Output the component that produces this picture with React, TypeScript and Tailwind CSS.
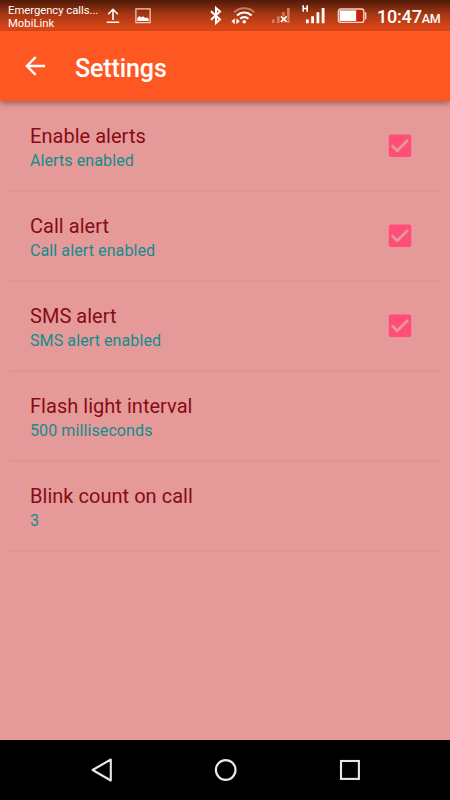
type Setting = { title: string; summary: string; checked?: boolean };

const settings: Setting[] = [
  { title: "Enable alerts", summary: "Alerts enabled", checked: true },
  { title: "Call alert", summary: "Call alert enabled", checked: true },
  { title: "SMS alert", summary: "SMS alert enabled", checked: true },
  { title: "Flash light interval", summary: "500 milliseconds" },
  { title: "Blink count on call", summary: "3" },
];

function StatusBar() {
  return (
    <header className="flex h-[31px] shrink-0 items-start bg-linear-to-b from-[#4f1a08] via-[#a53713] via-45% to-[#e64a19] text-white">
      <div className="ml-[8px] w-[98px] pt-[4px] text-[11.3px] leading-[13px] whitespace-nowrap">
        <div className="tracking-[-0.04px]">Emergency calls...</div>
        <div>MobiLink</div>
      </div>
      <svg className="mt-[8px] h-[16px] w-[14px]" viewBox="0 0 14 16" fill="none" stroke="#fff" strokeWidth="1.6">
        <path d="M7 12V1.4M2.2 6.2 7 1.3l4.8 4.9M.8 14.2h12.4" />
      </svg>
      <svg className="mt-[8px] ml-[15px] h-[16px] w-[16px]" viewBox="0 0 16 16" fill="none">
        <path d="M.9.9h14.2v13.8H.9z" stroke="#f6cfc2" strokeWidth="1.2" />
        <path d="M2.3 13V10l2.2-2 1.8 1.4L8 8.2l2.2 1.9 1.5-.6 2 1.3V13z" fill="#fff" />
      </svg>
      <svg className="mt-[6px] ml-[59px] h-[19px] w-[12px]" viewBox="0 0 12 19" fill="none" stroke="#fff" strokeWidth="2">
        <path d="m1 5.2 9 8.3L6 17V2l4 3.5L1 13.8" />
      </svg>
      <svg className="mt-[7px] ml-[9px] h-[17px] w-[26px]" viewBox="0 0 26 17" fill="none">
        <path d="M3 5.4a14.5 14.5 0 0 1 20.4 0" stroke="#c9795e" strokeWidth="2" />
        <path d="M6 8.6a10.3 10.3 0 0 1 14.6 0M9.2 11.8a5.8 5.8 0 0 1 8.2 0" stroke="#fff" strokeWidth="2.1" />
        <circle cx="13.3" cy="14.8" r="1.8" fill="#fff" />
        <path d="M.4 14.3 3.8 11.3v6zM8.8 14.3 5.4 11.3v6z" fill="#fff" />
      </svg>
      <svg className="mt-[7px] ml-[14px] h-[17px] w-[20px]" viewBox="0 0 20 17" fill="none">
        <path d="M1 12.5h2.7v3.6H1zM6 9.2h2.7v6.9H6zM11 5.2h2.7v10.9H11zM16 1h2.7v15.1H16z" fill="#d57a5c" />
        <path d="m10 9.3 5.6 5.6m0-5.6L10 14.9" stroke="#b93f19" strokeWidth="3.6" />
        <path d="m10 9.3 5.6 5.6m0-5.6L10 14.9" stroke="#fff" strokeWidth="1.8" />
      </svg>
      <svg className="mt-[5px] ml-[11px] h-[19px] w-[24px]" viewBox="0 0 24 19" fill="none">
        <path d="M1.2 .2v6.6M5.2 .2v6.6M1 3.5h4" stroke="#fff" strokeWidth="1.6" />
        <path d="M4 14.4h2.8v3.8H4zM9.2 11.2H12v7H9.2zM14.5 7.2h2.8v11h-2.8zM19.7 3h2.8v15.2h-2.8z" fill="#fff" />
      </svg>
      <svg className="mt-[8px] ml-[11px] h-[16px] w-[30px]" viewBox="0 0 30 16" fill="none">
        <rect x="1.4" y="1" width="25.4" height="13.4" rx="2.2" stroke="#f5d5cb" strokeWidth="1.4" />
        <path d="M2.6 2.4h16.8v10.6H2.6z" fill="#fff" />
        <path d="M19.4 2.4h6.2V13h-6.2z" fill="#c42209" />
        <path d="M27.8 5h.9v5.5h-.9" stroke="#f5d5cb" strokeWidth="1.3" />
      </svg>
      <div className="ml-[10px] pt-[5px] text-[18px] leading-[23px] font-medium tracking-[-0.2px] whitespace-nowrap">
        10:47<span className="text-[12.5px]">AM</span>
      </div>
    </header>
  );
}

function CheckBox() {
  return (
    <svg role="checkbox" aria-checked="true" className="h-[24px] w-[24px]" viewBox="0 0 24 24">
      <rect x=".8" y=".6" width="22.4" height="22.4" rx="2" fill="#ff4f78" />
      <path d="m3.8 11.4 5.4 5.4L20 6" fill="none" stroke="#e69999" strokeWidth="2.7" />
    </svg>
  );
}

function SettingRow({ title, summary, checked }: Setting) {
  return (
    <li className="mx-[10px] flex h-[90px] items-center justify-between border-b-2 border-[#df9494] pr-[28px] pl-[20px]">
      <div className="pt-[4px]">
        <div className="text-[20px] leading-[26px] tracking-[0.03px] text-[#850d12]">{title}</div>
        <div className="text-[16px] leading-[24px] tracking-[0.1px] text-[#108d8c]">{summary}</div>
      </div>
      {checked && <CheckBox />}
    </li>
  );
}

export default function App() {
  return (
    <div className="flex h-[800px] w-[450px] flex-col overflow-hidden bg-[#e69999] font-[Roboto,sans-serif]">
      <StatusBar />
      <div className="z-10 flex h-[70px] shrink-0 items-center bg-[#ff5722] pl-[25px] text-white shadow-[0_2px_6px_rgba(0,0,0,0.4)]">
        <svg className="h-[20px] w-[21px]" viewBox="0 0 21 20" fill="none" stroke="#fff" strokeWidth="2.4">
          <path d="M20 10H2.2M10.7 1.2 1.9 10l8.8 8.8" />
        </svg>
        <h1 className="ml-[29px] pt-[5px] text-[25px] leading-[32px] font-medium tracking-[-0.1px]">Settings</h1>
      </div>
      <ul className="flex-1 pt-px">
        {settings.map((s) => (
          <SettingRow key={s.title} {...s} />
        ))}
      </ul>
      <nav className="flex h-[60px] shrink-0 items-center bg-black pl-[91px]">
        <svg className="h-[24px] w-[22px]" viewBox="0 0 22 24" fill="none" stroke="#e8e8e8" strokeWidth="2.1" strokeLinejoin="round">
          <path d="M19.8 1.5v21L1.6 12z" />
        </svg>
        <svg className="ml-[101px] h-[24px] w-[24px]" viewBox="0 0 24 24" fill="none" stroke="#e8e8e8" strokeWidth="2.2">
          <circle cx="11.7" cy="12" r="9.8" />
        </svg>
        <svg className="ml-[101px] h-[22px] w-[22px]" viewBox="0 0 22 22" fill="none" stroke="#e8e8e8" strokeWidth="2.1">
          <rect x="2" y="2" width="17.9" height="17.9" />
        </svg>
      </nav>
    </div>
  );
}
